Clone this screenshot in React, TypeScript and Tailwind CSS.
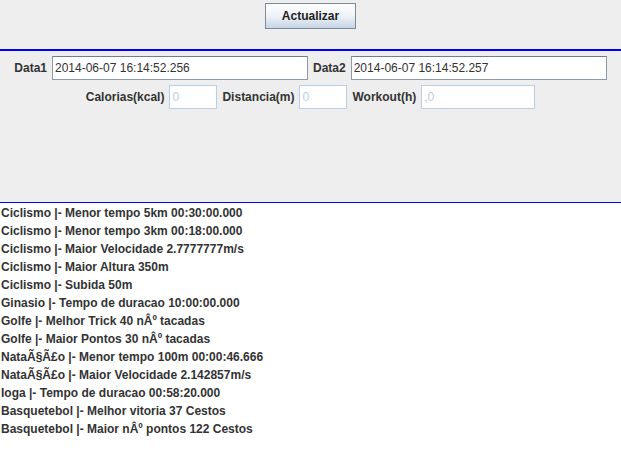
const RESULTS = [
  'Ciclismo |- Menor tempo 5km 00:30:00.000',
  'Ciclismo |- Menor tempo 3km 00:18:00.000',
  'Ciclismo |- Maior Velocidade 2.7777777m/s',
  'Ciclismo |- Maior Altura 350m',
  'Ciclismo |- Subida 50m',
  'Ginasio |- Tempo de duracao 10:00:00.000',
  'Golfe |- Melhor Trick 40 nÂº tacadas',
  'Golfe |- Maior Pontos 30 nÂº tacadas',
  'NataÃ§Ã£o |- Menor tempo 100m 00:00:46.666',
  'NataÃ§Ã£o |- Maior Velocidade 2.142857m/s',
  'Ioga |- Tempo de duracao 00:58:20.000',
  'Basquetebol |- Melhor vitoria 37 Cestos',
  'Basquetebol |- Maior nÂº pontos 122 Cestos',
]

function Label({ children }: { children: string }) {
  return <span className="text-[12px] font-bold leading-none text-[#333]">{children}</span>
}

function DateField({ value }: { value: string }) {
  return (
    <div className="flex h-[24px] w-[256px] items-center border border-[#8e99a6] border-t-[#6f7d8c] bg-white pl-[2px] text-[12px] text-[#333]">
      {value}
    </div>
  )
}

function DisabledField({ value, width }: { value: string; width: string }) {
  return (
    <div
      className={`flex h-[24px] items-center border border-[#b8cfe5] bg-white pl-[2px] text-[12px] text-[#b8cfe5] ${width}`}
    >
      {value}
    </div>
  )
}

export default function App() {
  return (
    <div
      className="flex h-[465px] w-[621px] flex-col bg-white"
      style={{ fontFamily: '"Liberation Sans", Arial, sans-serif' }}
    >
      {/* toolbar */}
      <div className="flex h-[49px] justify-center bg-[#eeeeee] pt-[3px]">
        <button className="h-[26px] w-[91px] border border-[#7a8a99] bg-gradient-to-b from-[#fefefe] via-[#eef3f8] to-[#c6d5e4] text-[12px] font-bold text-[#222]">
          Actualizar
        </button>
      </div>
      <div className="h-[2px] bg-[#0000ff]" />

      {/* filtros */}
      <div className="flex h-[151px] flex-col gap-[5px] bg-[#eeeeee] pt-[5px]">
        <div className="flex items-center justify-center gap-[5px]">
          <Label>Data1</Label>
          <DateField value="2014-06-07 16:14:52.256" />
          <Label>Data2</Label>
          <DateField value="2014-06-07 16:14:52.257" />
        </div>
        <div className="flex items-center justify-center gap-[5px]">
          <Label>Calorias(kcal)</Label>
          <DisabledField value="0" width="w-[48px]" />
          <Label>Distancia(m)</Label>
          <DisabledField value="0" width="w-[48px]" />
          <Label>Workout(h)</Label>
          <DisabledField value=",0" width="w-[114px]" />
        </div>
      </div>
      <div className="h-px bg-[#0000ff]" />

      {/* resultados */}
      <ul className="flex-1 bg-white pl-px pt-px">
        {RESULTS.map((line, i) => (
          <li key={i} className="h-[18px] text-[12px] font-bold leading-[18px] text-[#333]">
            {line}
          </li>
        ))}
      </ul>
    </div>
  )
}
